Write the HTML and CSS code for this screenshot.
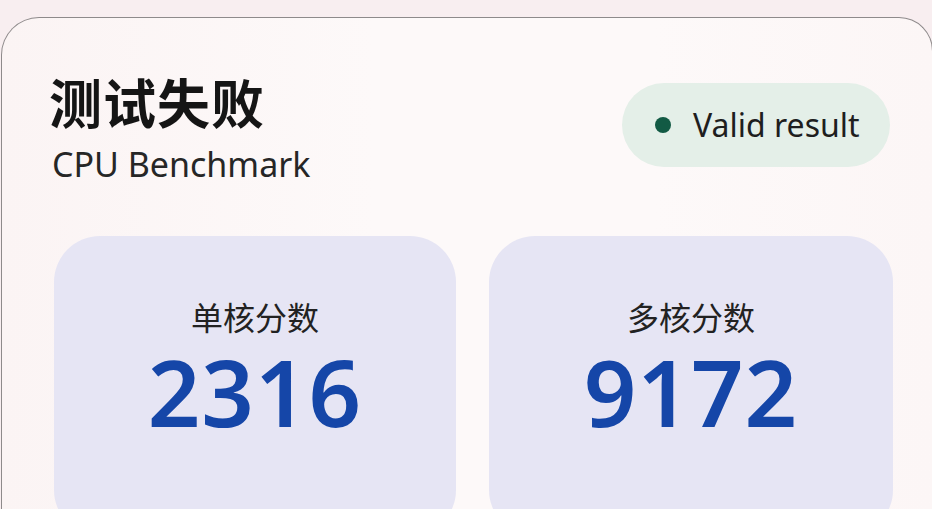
FILE: index.html
```html
<!DOCTYPE html>
<html lang="zh-CN">
<head>
<meta charset="utf-8">
<title>CPU Benchmark</title>
<link rel="stylesheet" href="styles.css">
</head>
<body>
  <main class="panel">
    <header class="head">
      <div class="titles">
        <h1 class="title">测试失败</h1>
        <p class="subtitle">CPU Benchmark</p>
      </div>
      <div class="pill"><span class="dot"></span><span class="pill-text">Valid result</span></div>
    </header>
    <section class="scores">
      <div class="score">
        <div class="score-label">单核分数</div>
        <div class="score-value">2316</div>
      </div>
      <div class="score score-b">
        <div class="score-label">多核分数</div>
        <div class="score-value">9172</div>
      </div>
    </section>
  </main>
</body>
</html>
```
FILE: styles.css
```css
html, body {
  margin: 0;
  padding: 0;
  height: 100%;
  overflow: hidden;
}
body {
  background: #f8eef0;
  font-family: "Noto Sans", "Noto Sans CJK SC", sans-serif;
  color: #1c1c1c;
}
.panel {
  box-sizing: border-box;
  margin: 17px 0 0 1px;
  width: 932px;
  height: 520px;
  background: linear-gradient(90deg, #fbf4f4 0%, #fdf9f9 40%, #fdf9f9 70%, #fcf6f6 100%);
  border: 1.5px solid #8e8a8b;
  border-bottom: none;
  border-radius: 38px 34px 0 0;
  padding: 52px 41px 0 47px;
}
.head {
  display: flex;
  justify-content: space-between;
  align-items: flex-start;
}
.titles {
  display: flex;
  flex-direction: column;
}
.title {
  margin: 0;
  font-family: "Noto Sans CJK SC", sans-serif;
  font-size: 53px;
  line-height: 62px;
  font-weight: 700;
  color: #151515;
  letter-spacing: 1px;
}
.subtitle {
  margin: 12px 0 0 3px;
  font-size: 34px;
  line-height: 40px;
  color: #262626;
}
.pill {
  margin-top: 13px;
  margin-right: 1px;
  box-sizing: border-box;
  width: 268px;
  height: 84px;
  border-radius: 42px;
  background: #e4efe8;
  display: flex;
  align-items: center;
  padding-left: 33px;
  gap: 22px;
}
.dot {
  width: 16px;
  height: 16px;
  border-radius: 50%;
  background: #125a44;
  flex: none;
}
.pill-text {
  font-size: 32px;
  line-height: 40px;
  color: #1e1e1e;
}
.scores {
  display: grid;
  grid-template-columns: 402px 404px;
  gap: 33px;
  margin: 52px 0 0 5px;
}
.score {
  height: 300px;
  border-radius: 46px;
  background: #e6e5f4;
  display: flex;
  flex-direction: column;
  align-items: center;
  padding-top: 60px;
  box-sizing: border-box;
}
.score-label {
  font-family: "Noto Sans CJK SC", sans-serif;
  font-size: 32px;
  line-height: 40px;
  color: #222;
}
.score-value {
  margin-top: 6px;
  font-size: 92px;
  line-height: 100px;
  font-weight: 650;
  color: #1546a8;
  letter-spacing: 1px;
}
```
